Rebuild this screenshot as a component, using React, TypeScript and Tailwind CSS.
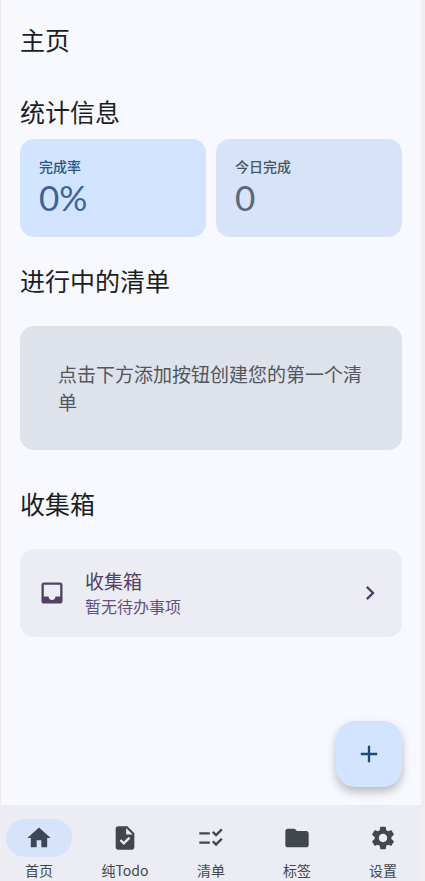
import { useState } from 'react';
import {
  MdAdd,
  MdChecklistRtl,
  MdChevronRight,
  MdFolder,
  MdHome,
  MdInbox,
  MdSettings,
  MdTask,
} from 'react-icons/md';

const tabs = [
  { id: 'home', label: '首页', icon: MdHome },
  { id: 'todo', label: '纯Todo', icon: MdTask },
  { id: 'lists', label: '清单', icon: MdChecklistRtl },
  { id: 'tags', label: '标签', icon: MdFolder },
  { id: 'settings', label: '设置', icon: MdSettings },
];

const stats = [
  { label: '完成率', value: '0%', card: 'bg-[#d2e4ff] text-[#3b6496]', labelColor: 'text-[#2b5585]' },
  { label: '今日完成', value: '0', card: 'bg-[#d6e3f8] text-[#5a6878]', labelColor: 'text-[#465465]' },
];

const SectionTitle = ({ children }: { children: string }) => (
  <h2 className="text-[25px] leading-9 text-[#1b1d22]">{children}</h2>
);

const App = () => {
  const [active, setActive] = useState('home');

  return (
    <div className="min-h-screen flex flex-col bg-[#f8f9ff] border-l border-r-4 border-l-[#ededf0] border-r-[#efefef] font-['Noto_Sans_CJK_SC',sans-serif]">
      <main className="relative flex-1 px-[19px] pt-[21px]">
        <h1 className="text-[25px] leading-9 text-[#1b1d22]">主页</h1>

        {/* Stats */}
        <section className="mt-9">
          <SectionTitle>统计信息</SectionTitle>
          <div className="mt-[10px] grid grid-cols-2 gap-[10px]">
            {stats.map((stat) => (
              <div key={stat.label} className={`rounded-[14px] px-[19px] pt-[17px] pb-[19px] ${stat.card}`}>
                <p className={`text-sm leading-5 font-medium ${stat.labelColor}`}>{stat.label}</p>
                <p className="font-[Lato,sans-serif] text-[35px] leading-[42px]">{stat.value}</p>
              </div>
            ))}
          </div>
        </section>

        {/* Lists in progress */}
        <section className="mt-[25px]">
          <SectionTitle>进行中的清单</SectionTitle>
          <div className="mt-7 rounded-[14px] bg-[#dee2eb] px-[38px] py-[34px]">
            <p className="text-[19px] leading-7 text-[#51565e]">点击下方添加按钮创建您的第一个清单</p>
          </div>
        </section>

        {/* Inbox */}
        <section className="mt-[35px]">
          <SectionTitle>收集箱</SectionTitle>
          <button className="mt-7 w-full flex items-center rounded-[14px] bg-[#ebecf4] px-[18px] py-[19px] text-left text-[#553f65]">
            <MdInbox className="text-[28px]" />
            <span className="ml-[19px] flex-1">
              <span className="block text-[19px] leading-[26px]">收集箱</span>
              <span className="block text-[16px] leading-6 text-[#66517a]">暂无待办事项</span>
            </span>
            <MdChevronRight className="text-[28px]" />
          </button>
        </section>

        <button
          aria-label="添加"
          className="absolute right-[19px] bottom-[18px] size-[66px] flex items-center justify-center rounded-[19px] bg-[#d2e4ff] text-[#1d4875] shadow-[0_5px_10px_rgba(0,0,0,0.25)]"
        >
          <MdAdd className="text-[28px]" />
        </button>
      </main>

      <nav className="flex justify-between bg-[#ebecf4] px-[5px] pt-[14px] pb-px">
        {tabs.map(({ id, label, icon: Icon }) => (
          <button
            key={id}
            onClick={() => setActive(id)}
            className="flex flex-col items-center gap-[3px] text-[#42474e]"
          >
            <span
              className={`w-[66px] h-[38px] flex items-center justify-center rounded-full ${
                active === id ? 'bg-[#d6e3f8] text-[#3a4858]' : ''
              }`}
            >
              <Icon className="text-[28px]" />
            </span>
            <span className="text-sm leading-5">{label}</span>
          </button>
        ))}
      </nav>
    </div>
  );
};

export default App;
